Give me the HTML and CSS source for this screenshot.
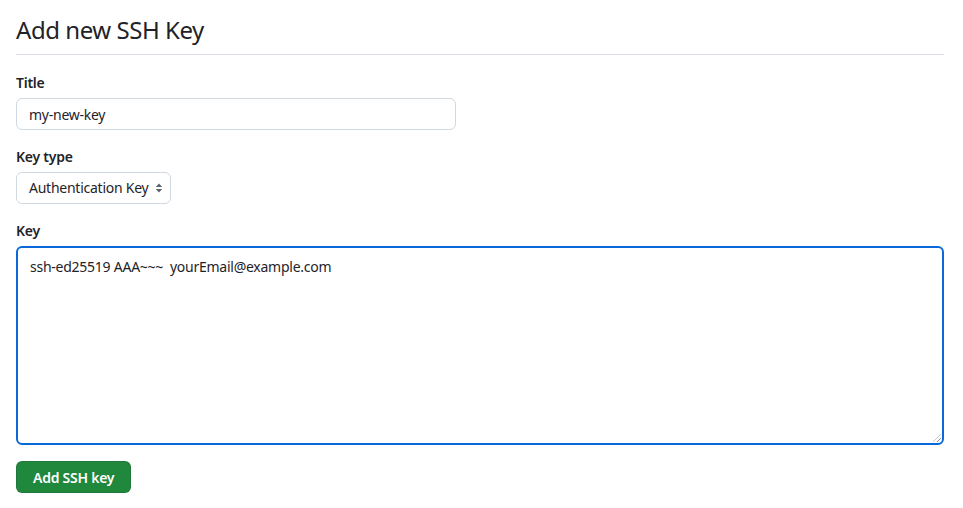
FILE: index.html
```html
<!DOCTYPE html>
<html lang="en">
<head>
<meta charset="utf-8">
<title>Add new SSH Key</title>
<link rel="stylesheet" href="styles.css">
</head>
<body>
<main class="page">
  <h1 class="page-title">Add new SSH Key</h1>
  <form class="form">
    <div class="field">
      <label class="label" for="title">Title</label>
      <input class="input input-title" id="title" type="text" value="my-new-key">
    </div>
    <div class="field">
      <label class="label" for="type">Key type</label>
      <div class="select">
        <span class="select-text">Authentication Key</span>
        <svg class="select-icon" width="8" height="12" viewBox="0 0 8 12" aria-hidden="true">
          <path d="M4 1.5 L7.2 5 H0.8 Z" fill="#59636e"/>
          <path d="M4 10.5 L7.2 7 H0.8 Z" fill="#59636e"/>
        </svg>
      </div>
    </div>
    <div class="field">
      <label class="label" for="key">Key</label>
      <div class="textarea" id="key">ssh-ed25519 AAA~~~&nbsp; yourEmail@example.com<span class="grip"></span></div>
    </div>
    <button class="btn-primary" type="button">Add SSH key</button>
  </form>
</main>
</body>
</html>
```

FILE: styles.css
```css
* { box-sizing: border-box; }
html, body { margin: 0; padding: 0; background: #ffffff; }
body {
  font-family: "Noto Sans", "Open Sans", "Liberation Sans", sans-serif;
  color: #1f2328;
  font-size: 14px;
  letter-spacing: -0.25px;
}
.page {
  width: 928px;
  margin: 0 0 0 16px;
  padding-top: 14px;
}
.page-title {
  margin: 0;
  font-size: 24px;
  font-weight: 400;
  line-height: 32px;
  letter-spacing: -0.45px;
  padding-bottom: 8px;
  border-bottom: 1px solid #d8dee4;
}
.form {
  display: flex;
  flex-direction: column;
  align-items: flex-start;
  padding-top: 17px;
}
.field {
  display: flex;
  flex-direction: column;
  align-items: flex-start;
  width: 100%;
  margin-bottom: 16px;
}
.label {
  font-weight: 600;
  font-size: 14px;
  line-height: 20px;
  padding-top: 1px;
  margin-bottom: 5px;
}
.input {
  font-family: inherit;
  font-size: 14px;
  letter-spacing: -0.25px;
  color: #1f2328;
  height: 32px;
  padding: 0 12px;
  border: 1px solid #d1d9e0;
  border-radius: 6px;
  background: #fff;
  outline: none;
}
.input-title { width: 440px; }
.select {
  display: flex;
  align-items: center;
  gap: 7px;
  height: 32px;
  padding: 0 7px 0 12px;
  border: 1px solid #d1d9e0;
  border-radius: 6px;
  background: #fff;
}
.select-text { line-height: 20px; }
.select-icon { display: block; }
.textarea {
  position: relative;
  width: 100%;
  height: 199px;
  padding: 9px 12px;
  border: 2px solid #0969da;
  border-radius: 6px;
  line-height: 20px;
  white-space: pre;
}
.grip {
  position: absolute;
  right: 1px;
  bottom: 1px;
  width: 8px;
  height: 8px;
  background: repeating-linear-gradient(135deg, transparent 0 2px, #8c959f 2px 3px);
  clip-path: polygon(100% 0, 100% 100%, 0 100%);
}
.btn-primary {
  font-family: inherit;
  font-size: 14px;
  font-weight: 600;
  letter-spacing: -0.25px;
  color: #ffffff;
  background: #1f883d;
  border: 1px solid rgba(31, 35, 40, 0.15);
  border-radius: 6px;
  height: 32px;
  padding: 0 16px;
}
```
